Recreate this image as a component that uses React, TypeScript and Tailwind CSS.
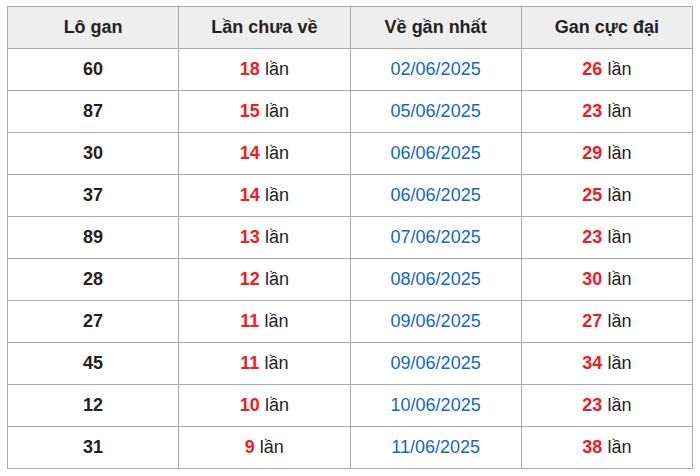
const rows = [
  { so: "60", chua: 18, ngay: "02/06/2025", max: 26 },
  { so: "87", chua: 15, ngay: "05/06/2025", max: 23 },
  { so: "30", chua: 14, ngay: "06/06/2025", max: 29 },
  { so: "37", chua: 14, ngay: "06/06/2025", max: 25 },
  { so: "89", chua: 13, ngay: "07/06/2025", max: 23 },
  { so: "28", chua: 12, ngay: "08/06/2025", max: 30 },
  { so: "27", chua: 11, ngay: "09/06/2025", max: 27 },
  { so: "45", chua: 11, ngay: "09/06/2025", max: 34 },
  { so: "12", chua: 10, ngay: "10/06/2025", max: 23 },
  { so: "31", chua: 9, ngay: "11/06/2025", max: 38 },
];

const headers = ["Lô gan", "Lần chưa về", "Về gần nhất", "Gan cực đại"];

export default function App() {
  return (
    <div className="bg-white w-[700px] h-[476px] pt-[6px] pl-[7px] font-['Liberation_Sans',Arial,sans-serif] text-[#222]">
      <table className="w-[686px] border-collapse table-fixed text-[18px]">
        <thead>
          <tr className="bg-[#eeeeee] h-[42px]">
            {headers.map((h) => (
              <th key={h} className="border border-[#aaaaaa] font-bold text-center">
                {h}
              </th>
            ))}
          </tr>
        </thead>
        <tbody>
          {rows.map((r, i) => (
            <tr key={i} className="h-[42px]">
              <td className="border border-[#aaaaaa] text-center font-bold">{r.so}</td>
              <td className="border border-[#aaaaaa] text-center">
                <span className="font-bold text-[#ee1c25]">{r.chua}</span> lần
              </td>
              <td className="border border-[#aaaaaa] text-center text-[#1166cc]">{r.ngay}</td>
              <td className="border border-[#aaaaaa] text-center">
                <span className="font-bold text-[#ee1c25]">{r.max}</span> lần
              </td>
            </tr>
          ))}
        </tbody>
      </table>
    </div>
  );
}
